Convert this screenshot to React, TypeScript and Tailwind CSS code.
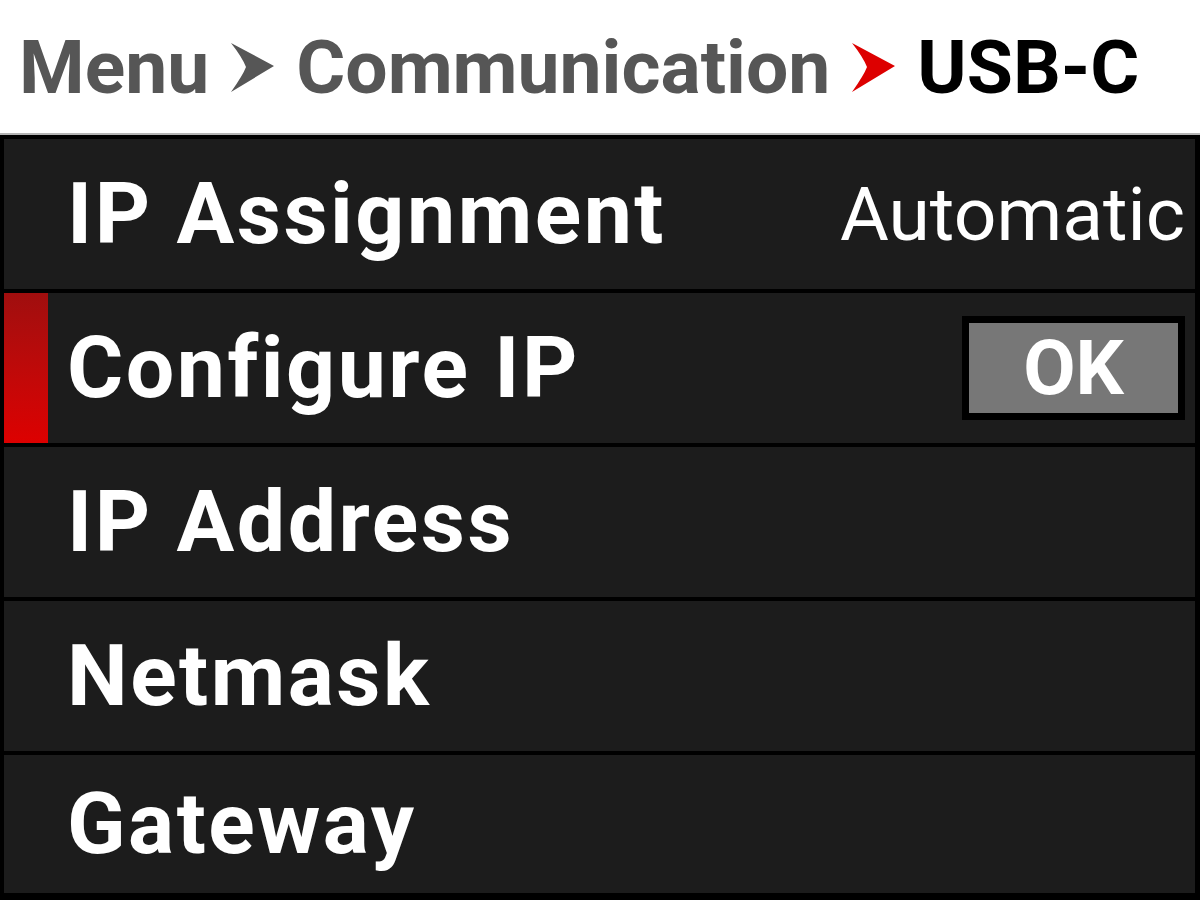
import type { ReactNode } from 'react';

function Arrow({ color }: { color: string }) {
  return (
    <svg width="43" height="50" viewBox="0 0 43 50" className="shrink-0">
      <path d="M0 0 L43 23 L0 49 Q12 32 15 24 Q11 14 0 0 Z" fill={color} />
    </svg>
  );
}

function Row({
  label,
  active = false,
  right,
  h = 'h-[150px]',
}: {
  label: string;
  active?: boolean;
  right?: ReactNode;
  h?: string;
}) {
  return (
    <div className={`flex items-center bg-[#1c1c1c] ${h}`}>
      <div
        className={`w-[44px] self-stretch ${
          active ? 'bg-gradient-to-b from-[#a00e0e] to-[#dd0000]' : ''
        }`}
      />
      <span className="ml-[19px] text-[86px] font-bold leading-none text-white tracking-[2.5px]">
        {label}
      </span>
      <div className="ml-auto pr-[10px]">{right}</div>
    </div>
  );
}

export default function App() {
  return (
    <div
      className="flex h-[900px] w-[1200px] flex-col bg-white"
      style={{ fontFamily: 'Roboto, "Liberation Sans", sans-serif' }}
    >
      <div className="flex h-[133px] items-center gap-[22px] pl-[19px] pt-[2px] text-[75px] font-bold leading-none">
        <span className="text-[#565656]">Menu</span>
        <Arrow color="#565656" />
        <span className="text-[#565656]">Communication</span>
        <Arrow color="#dd0000" />
        <span className="text-black">USB-C</span>
      </div>
      <div className="h-[2px] bg-[#b4b4b4]" />
      <div className="flex flex-1 flex-col gap-[4px] overflow-hidden border-b-[7px] border-l-[4px] border-r-[5px] border-t-[4px] border-black bg-black">
        <Row
          label="IP Assignment"
          right={
            <span className="text-[75px] font-normal leading-none text-white">Automatic</span>
          }
        />
        <Row
          label="Configure IP"
          active
          right={
            <div className="bg-black p-[7px]">
              <div className="flex h-[90px] w-[209px] items-center justify-center bg-[#777777] text-[76px] font-bold leading-none text-white">
                OK
              </div>
            </div>
          }
        />
        <Row label="IP Address" />
        <Row label="Netmask" />
        <Row label="Gateway" h="flex-1" />
      </div>
    </div>
  );
}
